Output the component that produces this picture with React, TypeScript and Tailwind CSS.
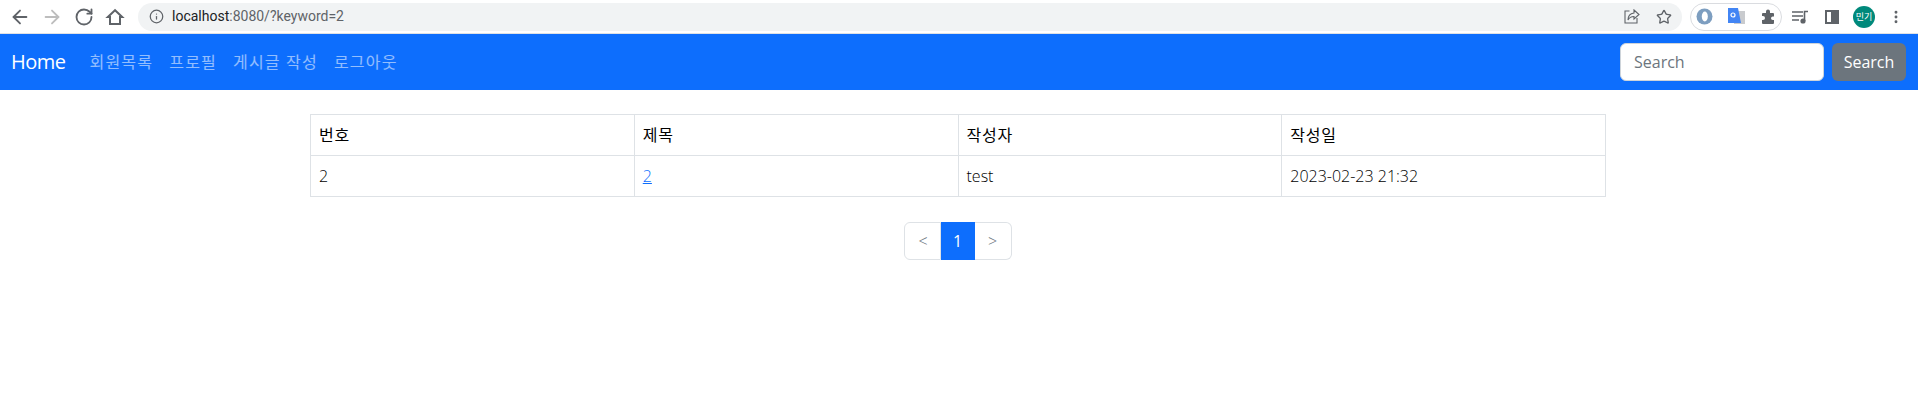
import React from 'react';
import { ArrowLeft, ArrowRight, RotateCw, Info, Star, EllipsisVertical } from 'lucide-react';

const font = { fontFamily: '"Open Sans", "Noto Sans CJK KR", sans-serif' };

const App: React.FC = () => {
  return (
    <div className="w-[1918px] h-[405px] bg-white overflow-hidden font-['Noto_Sans','Noto_Sans_CJK_KR',sans-serif]">
      {/* browser toolbar */}
      <div className="h-[34px] flex items-center border-b border-[#dfe1e5] bg-white">
        <div className="flex items-center pl-[9px] text-[#5f6368]">
          <ArrowLeft size={22} strokeWidth={2} />
          <ArrowRight size={22} strokeWidth={2} className="ml-[10px] text-[#bdbdbd]" />
          <RotateCw size={20} strokeWidth={2.2} className="ml-[11px]" />
          <svg width="20" height="20" viewBox="0 0 20 20" className="ml-[11px]" fill="none" stroke="#5f6368" strokeWidth="2">
            <path d="M10 3.2 2.8 10H5v7h10v-7h2.2z" strokeLinejoin="miter" />
          </svg>
        </div>
        <div className="ml-[13px] w-[1544px] h-[28px] rounded-full bg-[#f1f3f4] flex items-center pl-[11px] pr-[10px] text-[#5f6368]">
          <Info size={15} strokeWidth={2} />
          <span className="ml-[8px] text-[14px] font-['Roboto',sans-serif]"><span className="text-[#202124]">localhost</span>:8080/?keyword=2</span>
          <div className="ml-auto flex items-center gap-[16px]">
            <svg width="16" height="15" viewBox="0 0 16 15" fill="none" stroke="#5f6368" strokeWidth="1.1">
              <path d="M5.5 2H1v12h12V9" />
              <path d="M10 1l5 4.5L10 10V7.5C7 7.5 5 9 4 11c0-4 2-6.5 6-7z" />
            </svg>
            <Star size={16} strokeWidth={2} />
          </div>
        </div>
        <div className="ml-[8px] h-[28px] w-[92px] rounded-full border border-[#dadce0] flex items-center pl-[5px]">
          <svg width="17" height="17" viewBox="0 0 17 17">
            <circle cx="8.5" cy="8.5" r="8" fill="#7d9ec0" />
            <ellipse cx="8.8" cy="8.5" rx="3" ry="5" fill="#fff" />
          </svg>
          <svg width="17" height="18" viewBox="0 0 17 18" className="ml-[15px]">
            <rect x="6" y="3" width="11" height="13" fill="#c9cbce" />
            <path d="M0 0h10l3 15H0z" fill="#4285f4" />
            <circle cx="5" cy="7" r="2" fill="none" stroke="#fff" strokeWidth="1.2" />
          </svg>
          <svg width="15" height="15" viewBox="0 0 15 15" className="ml-[16px]" fill="#5f6368">
            <path d="M5 2.5a2 2 0 0 1 4 0V4h3a1 1 0 0 1 1 1v2.500h-1.200a1.800 1.800 0 0 0 0 3.600H13V14a1 1 0 0 1-1 1H2a1 1 0 0 1-1-1v-3h1a2 2 0 0 0 0-4H1V5a1 1 0 0 1 1-1h3z" />
          </svg>
        </div>
        <svg width="16" height="14" viewBox="0 0 16 14" className="ml-[10px]" fill="none" stroke="#5f6368" strokeWidth="1.600">
          <path d="M0 2h11M0 6h11M0 10h7M12.500 11V1.500H16" />
          <circle cx="11" cy="11" r="1.800" fill="#5f6368" />
        </svg>
        <div className="ml-[17px] w-[14px] h-[14px] border-2 border-[#5f6368] flex justify-end">
          <div className="w-[6px] h-full bg-[#5f6368]" />
        </div>
        <div className="ml-[14px] w-[22px] h-[22px] rounded-full bg-[#00897b] text-white text-[9px] flex items-center justify-center font-['Noto_Sans_CJK_KR',sans-serif]">민기</div>
        <EllipsisVertical size={16} strokeWidth={2.4} className="ml-[13px] text-[#5f6368]" />
      </div>

      {/* navbar */}
      <nav className="h-[56px] bg-[#0d6efd] flex items-center pl-[11px] pr-[12px]" style={font}>
        <a className="text-[20px] text-white tracking-[-0.5px] mr-[24px]">Home</a>
        <div className="flex items-center gap-[16px] text-[16px] text-white/55 tracking-[1.2px]">
          <a>회원목록</a>
          <a>프로필</a>
          <a>게시글 작성</a>
          <a>로그아웃</a>
        </div>
        <div className="ml-auto flex items-center gap-[8px]">
          <input
            placeholder="Search"
            className="w-[204px] h-[38px] rounded-[6px] bg-white border border-[#ced4da] px-[13px] text-[16px] placeholder:text-[#6c757d] outline-none"
          />
          <button className="w-[74px] h-[38px] rounded-[6px] bg-[#6c757d] text-white text-[16px]">Search</button>
        </div>
      </nav>

      {/* board */}
      <div className="w-[1296px] ml-[310px] mt-[24px]" style={font}>
        <table className="w-full table-fixed border-collapse text-[16px] text-black">
          <thead>
            <tr className="h-[41px] tracking-[0.8px]">
              <th className="border border-[#dee2e6] px-[8px] text-left font-normal">번호</th>
              <th className="border border-[#dee2e6] px-[8px] text-left font-normal">제목</th>
              <th className="border border-[#dee2e6] px-[8px] text-left font-normal">작성자</th>
              <th className="border border-[#dee2e6] px-[8px] text-left font-normal">작성일</th>
            </tr>
          </thead>
          <tbody className="font-light">
            <tr className="h-[41px]">
              <td className="border border-[#dee2e6] px-[8px]">2</td>
              <td className="border border-[#dee2e6] px-[8px]"><a className="text-[#0d6efd] underline">2</a></td>
              <td className="border border-[#dee2e6] px-[8px]">test</td>
              <td className="border border-[#dee2e6] px-[8px]">2023-02-23 21:32</td>
            </tr>
          </tbody>
        </table>

        <ul className="mt-[25px] flex justify-center text-[16px]">
          <li className="w-[37px] h-[38px] flex items-center justify-center border border-[#dee2e6] rounded-l-[6px] text-[#6c757d] font-light ml-[-1px] pl-[2px]">&lt;</li>
          <li className="w-[34px] h-[38px] flex items-center justify-center bg-[#0d6efd] text-white">1</li>
          <li className="w-[37px] h-[38px] flex items-center justify-center border border-[#dee2e6] border-l-0 rounded-r-[6px] text-[#6c757d] font-light">&gt;</li>
        </ul>
      </div>
    </div>
  );
};

export default App;
